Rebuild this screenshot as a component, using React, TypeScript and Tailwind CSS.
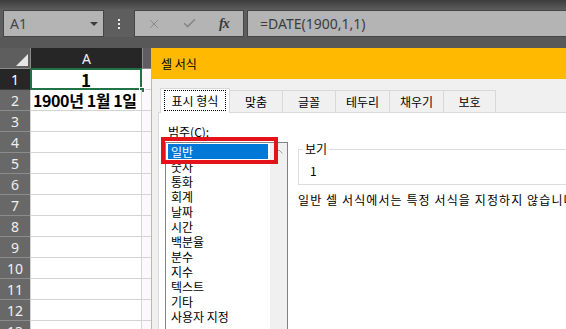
import { X, Check } from 'lucide-react';

const rows = [1, 2, 3, 4, 5, 6, 7, 8, 9, 10, 11, 12, 13];

const categories = ['일반', '숫자', '통화', '회계', '날짜', '시간', '백분율', '분수', '지수', '텍스트', '기타', '사용자 지정'];

const tabs = [
  { label: '맞춤', w: 'w-[54px]' },
  { label: '글꼴', w: 'w-[54px]' },
  { label: '테두리', w: 'w-[55px]' },
  { label: '채우기', w: 'w-[55px]' },
  { label: '보호', w: 'w-[53px]' },
];

export default function App() {
  return (
    <div className="relative w-[566px] h-[329px] overflow-hidden bg-[#5e5e5e] font-['Noto_Sans','Noto_Sans_CJK_KR',sans-serif]">
      {/* ribbon edge */}
      <div className="h-[10px] bg-gradient-to-b from-[#3c3c3c] to-[#5e5e5e]" />

      {/* formula bar */}
      <div className="flex h-[27px] items-stretch">
        <div className="ml-[3px] w-[101px] flex items-center justify-between border border-[#454545] bg-[#b4b4b4] pl-[6px] pr-[5px]">
          <span className="text-[14px] text-[#454545]">A1</span>
          <span className="w-0 h-0 border-l-[4px] border-r-[4px] border-t-[4px] border-l-transparent border-r-transparent border-t-[#3c3c3c]" />
        </div>
        <div className="w-[30px] flex flex-col items-center justify-center gap-[2px]">
          <span className="w-[2px] h-[2px] bg-[#e8e8e8]" />
          <span className="w-[2px] h-[2px] bg-[#e8e8e8]" />
          <span className="w-[2px] h-[2px] bg-[#e8e8e8]" />
        </div>
        <div className="w-[110px] flex items-center border border-[#454545] bg-[#b4b4b4] pl-[12px]">
          <X size={14} strokeWidth={1.6} className="text-[#858585]" />
          <Check size={15} strokeWidth={2.4} className="ml-[21px] text-[#858585]" />
          <span className="ml-[22px] font-['Liberation_Serif',serif] italic font-bold text-[14px] text-[#3a3a3a] tracking-[-1px]">fx</span>
        </div>
        <div className="ml-[3px] flex-1 flex items-center border border-r-0 border-[#454545] bg-[#b4b4b4] pl-[12px]">
          <span className="text-[14px] text-[#3c3c3c]">=DATE(1900,1,1)</span>
        </div>
      </div>

      <div className="h-[11px] bg-[#585858]" />

      {/* sheet */}
      <div className="flex flex-col">
        <div className="flex h-[21px] border-b border-[#8a8a8a]">
          <div className="relative w-[30px] bg-[#5e5e5e]">
            <svg className="absolute right-[2px] bottom-[2px]" width="12" height="12" viewBox="0 0 12 12">
              <polygon points="12,0 12,12 0,12" fill="#e6e6e6" />
            </svg>
          </div>
          <div className="w-[112px] border-l border-[#8a8a8a] bg-[#262626] flex items-center justify-center text-[14px] text-[#f2f2f2]">A</div>
          <div className="flex-1 border-l border-[#8a8a8a] bg-[#5e5e5e]" />
        </div>
        {rows.map((r) => (
          <div key={r} className="flex h-[21px]">
            <div
              className={`w-[30px] flex items-center justify-center border-b text-[14px] ${
                r === 1 ? 'bg-[#262626] border-[#3a3a3a] text-white' : 'bg-[#686868] border-[#8c8c8c] text-[#f0f0f0]'
              }`}
            >
              {r}
            </div>
            <div className="relative w-[112px] border-l border-r border-b border-[#d4d4d4] bg-white flex items-center">
              {r === 1 && (
                <>
                  <span className="w-full text-center font-['Noto_Sans_CJK_KR',sans-serif] font-bold text-[17px] leading-[19px] text-black">1</span>
                  <span className="absolute -left-px -top-px -right-px -bottom-px border-2 border-[#217346]" />
                  <span className="absolute -right-[4px] -bottom-[4px] w-[6px] h-[6px] bg-[#217346] border border-white" />
                </>
              )}
              {r === 2 && (
                <span className="pl-[2px] font-['Noto_Sans_CJK_KR',sans-serif] font-bold text-[16px] leading-[19px] tracking-[-0.4px] text-black whitespace-nowrap">
                  1900년 1월 1일
                </span>
              )}
            </div>
            <div className="flex-1 border-b border-[#d4d4d4] bg-gradient-to-r from-[#fafafa] to-[#e2e2e2]" />
          </div>
        ))}
      </div>

      {/* 셀 서식 dialog */}
      <div className="absolute left-[151px] top-[48px] right-0 bottom-0 flex flex-col border-l border-[#ffb900] font-['Noto_Sans_CJK_KR',sans-serif] text-[12px] text-black">
        <div className="h-[31px] shrink-0 bg-[#ffb900] flex items-center pl-[9px]">셀 서식</div>
        <div className="flex-1 flex flex-col bg-[#f0f0f0] pl-[6px] pt-[9px]">
          <div className="flex items-end h-[24px] pl-[2px]">
            <div className="relative z-10 w-[70px] h-[25px] -mb-px bg-white border border-b-0 border-[#d9d9d9] flex items-center justify-center">
              <span className="border border-dotted border-black px-[7px] h-[21px] leading-[19px] -mt-[1px]">표시 형식</span>
            </div>
            {tabs.map((t) => (
              <div
                key={t.label}
                className={`${t.w} h-[22px] -ml-px bg-[#f0f0f0] border border-b-0 border-[#d9d9d9] flex items-center justify-center`}
              >
                {t.label}
              </div>
            ))}
          </div>

          <div className="flex-1 flex bg-white border-t border-l border-[#d9d9d9] pl-[6px]">
            <div className="flex flex-col">
              <div className="mt-[11px] ml-[3px] h-[16px] leading-[16px]">
                범주(<span className="underline">C</span>):
              </div>
              <div className="relative mt-[2px] w-[123px] flex-1 flex border border-b-0 border-[#828282] bg-white">
                <div className="w-[104px] flex flex-col">
                  {categories.map((c, i) => (
                    <div
                      key={c}
                      className={`h-[15px] leading-[15px] pl-[3px] whitespace-nowrap ${
                        i === 0 ? 'mx-[2px] mt-px bg-[#0078d7] text-white' : 'ml-[2px]'
                      }`}
                    >
                      {c}
                    </div>
                  ))}
                </div>
                <div className="w-[17px] bg-[#f0f0f0] flex justify-center pt-[6px]">
                  <svg width="8" height="5" viewBox="0 0 8 5">
                    <path d="M0.5 4.5 L4 1 L7.5 4.5" fill="none" stroke="#a3a3a3" strokeWidth="1" />
                  </svg>
                </div>
                {/* red highlight */}
                <span className="absolute left-[-5px] top-[-6px] w-[117px] h-[27px] border-[4px] border-[#e4121b]" />
              </div>
            </div>

            <div className="ml-[10px] flex-1 flex flex-col">
              <fieldset className="mt-[28px] h-[44px] border border-r-0 border-[#dcdcdc] pl-[4px]">
                <legend className="px-[2px] leading-[16px]">보기</legend>
                <div className="mt-[6px] ml-[7px] leading-[16px]">1</div>
              </fieldset>
              <div className="mt-[7px] leading-[16px] whitespace-nowrap tracking-[1.1px]">
                일반 셀 서식에서는 특정 서식을 지정하지 않습니다.
              </div>
            </div>
          </div>
        </div>
      </div>
    </div>
  );
}
